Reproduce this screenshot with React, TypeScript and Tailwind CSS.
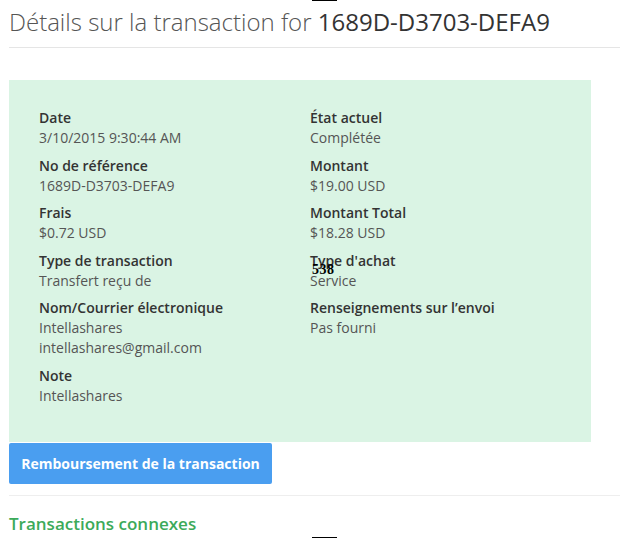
import React from 'react';

type Field = { label: string; values: string[] };

const leftFields: Field[] = [
  { label: 'Date', values: ['3/10/2015 9:30:44 AM'] },
  { label: 'No de référence', values: ['1689D-D3703-DEFA9'] },
  { label: 'Frais', values: ['$0.72 USD'] },
  { label: 'Type de transaction', values: ['Transfert reçu de'] },
  { label: 'Nom/Courrier électronique', values: ['Intellashares', 'intellashares@gmail.com'] },
  { label: 'Note', values: ['Intellashares'] },
];

const rightFields: Field[] = [
  { label: 'État actuel', values: ['Complétée'] },
  { label: 'Montant', values: ['$19.00 USD'] },
  { label: 'Montant Total', values: ['$18.28 USD'] },
  { label: "Type d'achat", values: ['Service'] },
  { label: 'Renseignements sur l’envoi', values: ['Pas fourni'] },
];

function FieldList({ fields }: { fields: Field[] }) {
  return (
    <div className="flex flex-col gap-[7.5px]">
      {fields.map((f) => (
        <div key={f.label} className="text-[14px] leading-[20px]">
          <div className="font-semibold text-[#333]">{f.label}</div>
          {f.values.map((v) => (
            <div key={v} className="text-[#555]">
              {v}
            </div>
          ))}
        </div>
      ))}
    </div>
  );
}

export default function App() {
  return (
    <div className="relative w-[620px] h-[538px] bg-white overflow-hidden pl-[9px] font-['Open_Sans',sans-serif]">
      <h1 className="pt-[7px] pb-[10px] text-[24px] leading-[30px] font-light text-[#555] border-b border-[#e5e5e5] whitespace-nowrap">
        Détails sur la transaction for <span className="font-normal text-[#333]">1689D-D3703-DEFA9</span>
      </h1>

      <div className="mt-[32px] w-[582px] bg-[#daf4e4] pt-[28px] pb-[36px] pl-[30px] grid grid-cols-[271px_1fr]">
        <FieldList fields={leftFields} />
        <FieldList fields={rightFields} />
      </div>

      <button className="mt-px h-[41px] w-[263px] rounded-[2px] bg-[#4a9ef0] text-white text-[14px] font-bold">
        Remboursement de la transaction
      </button>

      <div className="mt-[11px] border-t border-[#eee] pt-[16px]">
        <h2 className="text-[17px] leading-[24px] font-semibold text-[#3caa5a]">Transactions connexes</h2>
      </div>

      {/* artefacts du screenshot */}
      <div className="absolute left-[312px] top-0 w-[25px] h-px bg-black" />
      <div className="absolute left-[312px] top-[537px] w-[25px] h-px bg-black" />
      <div className="absolute left-[312px] top-[263px] text-[14px] leading-[14px] tracking-[0.5px] font-bold text-black font-['Liberation_Serif',serif]">
        538
      </div>
    </div>
  );
}
